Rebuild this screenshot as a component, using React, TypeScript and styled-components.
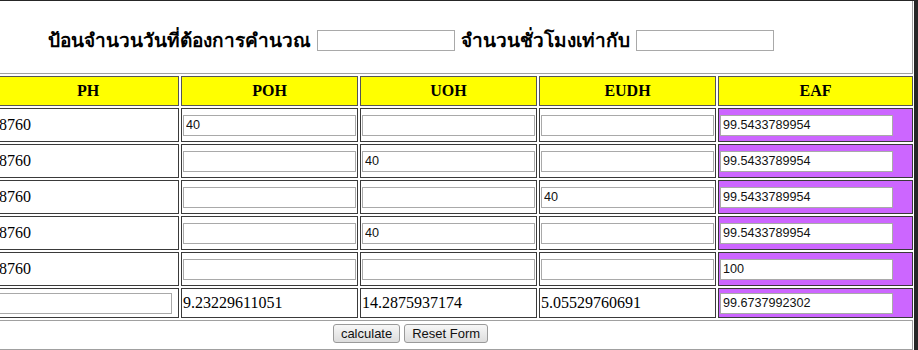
import React from 'react';
import styled, { createGlobalStyle } from 'styled-components';


const GlobalStyle = createGlobalStyle `
  body {
    margin: 0;
    background: #ffffff;
    font-family: "Liberation Serif", "Times New Roman", serif;
  }
`

const Viewport = styled.div `
  width: 918px;
  height: 350px;
  overflow: hidden;
`

// the form table is wider than the window and scrolled a little to the right
const Frame = styled.div `
  margin-left: -92px;
  width: max-content;
  display: grid;
  grid-template-columns: 87px 182px 177px 177px 177px 195px;
  gap: 2px;
  padding-right: 1px;
  border-top: 1px solid #262626;
  border-right: 4px solid #262626;
`

const TitleCell = styled.div `
  grid-column: 1 / -1;
  box-sizing: border-box;
  height: 73px;
  padding-top: 6px;
  border: 1px solid #a0a0a0;
  border-top: none;
  display: flex;
  justify-content: center;
  align-items: center;
  gap: 6px;
`

const Label = styled.span `
  font-family: Tahoma, "Noto Sans", "DejaVu Sans", sans-serif;
  font-weight: bold;
  font-size: 19px;
  color: #000;
`

interface FieldProps {
  $width: number;
}

const Field = styled.input<FieldProps> `
  box-sizing: border-box;
  width: ${props => props.$width}px;
  height: 21px;
  margin: 0;
  padding: 0 2px;
  border: 1px solid #a9a9a9;
  background: #fff;
  font-family: "Liberation Sans", Arial, sans-serif;
  font-size: 12.6px;
  color: #111;
  outline: none;
`

const HeadCell = styled.div `
  box-sizing: border-box;
  height: 30px;
  border: 1px solid #555;
  background: #ffff00;
  display: flex;
  justify-content: center;
  align-items: center;
  font-weight: bold;
  font-size: 16px;
`

interface CellProps {
  $height: number;
  $fill?: string;
}

const Cell = styled.div<CellProps> `
  box-sizing: border-box;
  height: ${props => props.$height}px;
  padding: 0 1px;
  border: 1px solid #3a3a3a;
  background: ${props => props.$fill || '#fff'};
  display: flex;
  align-items: center;
  font-size: 16px;
  white-space: nowrap;
  overflow: hidden;
`

const ButtonCell = styled.div `
  grid-column: 1 / -1;
  box-sizing: border-box;
  height: 30px;
  padding-top: 3px;
  border: 1px solid #a0a0a0;
  display: flex;
  justify-content: center;
  align-items: flex-start;
  gap: 4px;
`

const Button = styled.button `
  height: 19px;
  margin: 0;
  padding: 0 7px;
  border: 1px solid #9a9a9a;
  border-radius: 3px;
  background: linear-gradient(#f7f7f7, #dddddd);
  font-family: "Liberation Sans", Arial, sans-serif;
  font-size: 13px;
  color: #111;
  line-height: 17px;
`

const PURPLE = '#cc66ff';

const headers = ['', 'PH', 'POH', 'UOH', 'EUDH', 'EAF'];

const rows = [
  { poh: '40', uoh: '', eudh: '', eaf: '99.5433789954' },
  { poh: '', uoh: '40', eudh: '', eaf: '99.5433789954' },
  { poh: '', uoh: '', eudh: '40', eaf: '99.5433789954' },
  { poh: '', uoh: '40', eudh: '', eaf: '99.5433789954' },
  { poh: '', uoh: '', eudh: '', eaf: '100' },
];

const App: React.FC = () => {
  return (
    <Viewport>
      <GlobalStyle/>
      <Frame>
        <TitleCell>
          <Label>ป้อนจำนวนวันที่ต้องการคำนวณ</Label>
          <Field $width={138} defaultValue=""/>
          <Label>จำนวนชั่วโมงเท่ากับ</Label>
          <Field $width={138} defaultValue=""/>
        </TitleCell>

        {headers.map((h, i) => (
          <HeadCell key={i}>{h}</HeadCell>
        ))}

        {rows.map((r, i) => (
          <React.Fragment key={i}>
            <Cell $height={34}/>
            <Cell $height={34}>8760</Cell>
            <Cell $height={34}><Field $width={173} defaultValue={r.poh}/></Cell>
            <Cell $height={34}><Field $width={173} defaultValue={r.uoh}/></Cell>
            <Cell $height={34}><Field $width={173} defaultValue={r.eudh}/></Cell>
            <Cell $height={34} $fill={PURPLE}><Field $width={173} defaultValue={r.eaf}/></Cell>
          </React.Fragment>
        ))}

        <Cell $height={30}/>
        <Cell $height={30}><Field $width={173} defaultValue=""/></Cell>
        <Cell $height={30}>9.23229611051</Cell>
        <Cell $height={30}>14.2875937174</Cell>
        <Cell $height={30}>5.05529760691</Cell>
        <Cell $height={30} $fill={PURPLE}><Field $width={173} defaultValue="99.6737992302"/></Cell>

        <ButtonCell>
          <Button type="button">calculate</Button>
          <Button type="reset">Reset Form</Button>
        </ButtonCell>
      </Frame>
    </Viewport>
  )
}

export default App;
